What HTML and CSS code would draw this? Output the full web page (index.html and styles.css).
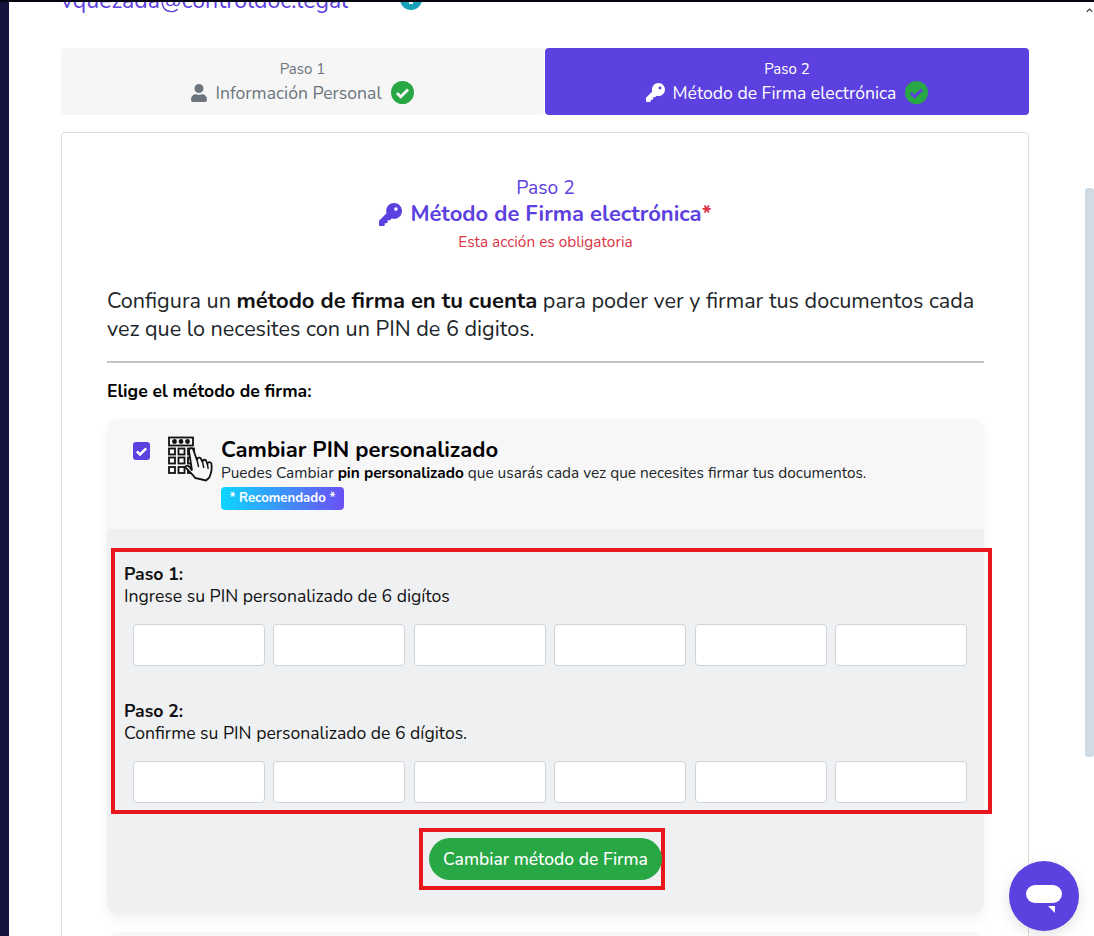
FILE: index.html
```html
<!DOCTYPE html>
<html lang="es">
<head>
<meta charset="utf-8">
<title>Método de Firma electrónica</title>
<link rel="stylesheet" href="styles.css">
</head>
<body>
<svg class="defs" width="0" height="0" aria-hidden="true">
  <symbol id="key" viewBox="0 0 512 512"><path d="M336 352c97 0 176-79 176-176S433 0 336 0 160 79 160 176c0 19 3 37 8 54L7 391c-4 4-7 11-7 17v80c0 13 11 24 24 24h80c13 0 24-11 24-24v-40h40c13 0 24-11 24-24v-40h40c6 0 13-3 17-7l33-33c17 5 35 8 54 8zm40-176a40 40 0 1 1 0-80 40 40 0 1 1 0 80z"/></symbol>
  <symbol id="ok" viewBox="0 0 24 24"><circle cx="12" cy="12" r="12" fill="#28a745"/><path d="M6.2 12.6l3.900 3.900 7.700-7.700" fill="none" stroke="currentColor" stroke-width="3"/></symbol>
</svg>
<div class="topline"></div>
<div class="layout">
  <div class="side"></div>
  <main class="main">
    <div class="who">
      <span class="email">vquezada@controldoc.legal</span>
      <span class="info"></span>
    </div>
    <div class="tabs">
      <div class="tab">
        <div>Paso 1</div>
        <div class="tab-title">
          <svg class="tab-ic" viewBox="0 0 448 512"><path fill="currentColor" d="M224 256a128 128 0 1 0 0-256 128 128 0 1 0 0 256zm90 32h-17a174 174 0 0 1-146 0h-17C60 288 0 348 0 422v42c0 26 22 48 48 48h352c26 0 48-22 48-48v-42c0-74-60-134-134-134z"/></svg>
          <span class="tab-text">Información Personal</span>
          <svg class="tab-ok ok-light"><use href="#ok"/></svg>
        </div>
      </div>
      <div class="tab tab-active">
        <div>Paso 2</div>
        <div class="tab-title">
          <svg class="tab-ic key-ic"><use href="#key"/></svg>
          <span class="tab-text">Método de Firma electrónica</span>
          <svg class="tab-ok ok-purple"><use href="#ok"/></svg>
        </div>
      </div>
    </div>
    <section class="card">
      <div class="head">
        <div class="head-step">Paso 2</div>
        <h1 class="head-title"><svg class="head-key"><use href="#key"/></svg>Método de Firma electrónica<span class="star">*</span></h1>
        <div class="head-req">Esta acción es obligatoria</div>
      </div>
      <p class="intro">Configura un <b>método de firma en tu cuenta</b> para poder ver y firmar tus documentos cada vez que lo necesites con un PIN de 6 digitos.</p>
      <hr class="rule">
      <div class="choose">Elige el método de firma:</div>
      <div class="option">
        <div class="opt-head">
          <span class="check"><svg viewBox="0 0 16 16"><path d="M3.600 8.300l3 3 5.800-5.800" fill="none" stroke="#fff" stroke-width="2.400"/></svg></span>
          <svg class="pad" viewBox="0 0 46 46" fill="none" stroke="#111" stroke-width="1.800">
            <rect x="1" y="1.500" width="24" height="8"/>
            <circle cx="6.500" cy="5.500" r="1.500" fill="#111"/><circle cx="13" cy="5.500" r="1.500" fill="#111"/><circle cx="19.500" cy="5.500" r="1.500" fill="#111"/>
            <rect x="1" y="12.500" width="6" height="6"/><rect x="10.500" y="12.500" width="6" height="6"/><rect x="20" y="12.500" width="6" height="6"/>
            <rect x="1" y="21.500" width="6" height="6"/><rect x="10.500" y="21.500" width="6" height="6"/><rect x="20" y="21.500" width="6" height="6"/>
            <rect x="1" y="31" width="6" height="6"/><rect x="10.500" y="31" width="6" height="6"/><rect x="20" y="31" width="6" height="6"/>
            <path fill="#f7f7f8" d="M17 31c1.500-2 4-1.500 5 .5l2 3L21 15c-.5-3 3.500-4 4.500-.8l3.500 10c0-3 3.500-3.500 4.300-.8l1 2.600c.2-2.800 3.400-3 4.200-.5l.9 2.400c.4-2.500 3.800-2.400 4.100.3 .8 5.200-.2 9-2.300 13.600L38 44.500 27 42c-1-2.500-3.500-4-5-6z"/>
            <path d="M29 24l1.600 7M34.500 26l1.300 6M39.400 28l.8 5" stroke-width="1.400"/>
          </svg>
          <div class="opt-text">
            <h2 class="opt-title">Cambiar PIN personalizado</h2>
            <div class="opt-desc">Puedes Cambiar <b>pin personalizado</b> que usarás cada vez que necesites firmar tus documentos.</div>
            <span class="badge">* Recomendado *</span>
          </div>
        </div>
        <div class="opt-body">
          <div class="pin-box">
            <div class="pin-label"><b>Paso 1:</b><br>Ingrese su PIN personalizado de 6 digítos</div>
            <div class="pins pins-first">
              <span class="pin"></span><span class="pin"></span><span class="pin"></span><span class="pin"></span><span class="pin"></span><span class="pin"></span>
            </div>
            <div class="pin-label"><b>Paso 2:</b><br>Confirme su PIN personalizado de 6 dígitos.</div>
            <div class="pins">
              <span class="pin"></span><span class="pin"></span><span class="pin"></span><span class="pin"></span><span class="pin"></span><span class="pin"></span>
            </div>
          </div>
          <div class="btn-row">
            <div class="btn-mark"><button class="btn" type="button">Cambiar método de Firma</button></div>
          </div>
        </div>
      </div>
      <div class="option option-next"></div>
    </section>
  </main>
  <div class="scroll">
    <svg class="scroll-up" viewBox="0 0 10 6"><path d="M1 5l4-4 4 4" fill="none" stroke="#333" stroke-width="1.600"/></svg>
    <div class="thumb"></div>
  </div>
</div>
<button class="chat" type="button" aria-label="Chat">
  <svg viewBox="0 0 36 28"><rect x="0" y="0" width="36" height="18" rx="9" fill="#fff"/><path d="M22 21h7v7z" fill="#fff"/></svg>
</button>
</body>
</html>
```
FILE: styles.css
```css
* { box-sizing: border-box; }
html, body { margin: 0; height: 100%; overflow: hidden; }
body { font-family: "Nunito", "Lato", "Liberation Sans", sans-serif; background: #fff; color: #000; position: relative; }
b { font-weight: 700; }
.defs { display: block; height: 0; }
.topline { height: 2px; background: #05060f; }
.layout { display: flex; height: 934px; }
.side { width: 9px; flex: none; background: #14123f; }
.main { width: 1076px; flex: none; padding: 0 56px 0 52px; overflow: hidden; }
.scroll { width: 9px; flex: none; padding-top: 6px; display: flex; flex-direction: column; }
.scroll-up { width: 7px; height: 5px; margin-left: 1px; }
.thumb { width: 9px; height: 569px; margin-top: 175px; background: #cfdbe5; border-radius: 3px; }

.who { height: 46px; display: flex; gap: 52px; margin-top: -12px; margin-bottom: 12px; align-items: flex-start; }
.email { font-size: 23.100px; line-height: 22px; color: #5c40e0; }
.info { width: 22px; height: 22px; margin-top: -2px; border-radius: 50%; background: #17a2b8; display: flex; justify-content: center; align-items: flex-end; padding-bottom: 6px; }
.info::before { content: ""; width: 4px; height: 4px; background: #fff; }

.tabs { display: grid; grid-template-columns: 483px 484px; gap: 1px; }
.tab { height: 67px; border-radius: 4px; background: #f6f6f6; color: #6c757d; text-align: center; font-size: 15px; line-height: 20px; padding-top: 11px; }
.tab-title { display: flex; justify-content: center; align-items: center; gap: 8px; font-size: 17.600px; line-height: 26px; }
.tab-text { padding-top: 1px; }
.tab-ic { width: 16px; height: 18px; fill: currentColor; }
.key-ic { width: 19px; height: 19px; }
.tab-ok { width: 23px; height: 23px; margin-left: 1px; }
.ok-light { color: #f6f6f6; }
.ok-purple { color: #5c40e0; }
.tab-active { background: #5c40e0; color: #fff; }

.card { margin-top: 17px; height: 830px; border: 1px solid #dedede; border-radius: 4px; padding: 42px 44px 0 45px; }
.head { text-align: center; }
.head-step { font-size: 19.300px; line-height: 25px; color: #5c40e0; }
.head-title { margin: 0; font-size: 22px; line-height: 28px; font-weight: 700; color: #5c40e0; display: flex; justify-content: center; align-items: center; gap: 8px; }
.head-key { width: 23px; height: 23px; fill: #5c40e0; }
.star { color: #dc3545; margin-left: -8px; }
.head-req { font-size: 15.400px; line-height: 20px; margin-top: 4px; color: #dc3545; }

.intro { margin: 35px 0 0; font-size: 21.600px; line-height: 28px; color: #212529; }
.intro b { color: #111; font-size: 22px; }
.rule { margin: 18px 0 0; border: 0; border-top: 2px solid #c4c4c4; }
.choose { margin-top: 17px; font-size: 17.600px; line-height: 22px; font-weight: 700; }

.option { margin-top: 17px; height: 495px; border-radius: 12px; background: #f7f7f8; box-shadow: 0 6px 12px rgba(0,0,0,.05); overflow: visible; display: flex; flex-direction: column; }
.opt-head { height: 110px; display: flex; padding: 17px 0 0 26px; }
.check { width: 17px; height: 18px; margin-top: 6px; border-radius: 3px; background: #5c40e0; flex: none; }
.check svg { display: block; width: 17px; height: 18px; }
.pad { width: 46px; height: 46px; margin-left: 18px; flex: none; }
.opt-text { margin: 1px 0 0 7px; }
.opt-title { margin: 0; font-size: 22px; line-height: 26px; font-weight: 700; }
.opt-desc { font-size: 15.400px; line-height: 20px; color: #212529; }
.opt-desc b { color: #000; }
.badge { display: inline-block; margin-top: 4px; padding: 0 8.500px; height: 23px; line-height: 22px; border-radius: 4px; font-size: 13.200px; font-weight: 700; color: #fff; background: linear-gradient(90deg, #0dd6ff, #6b50f5); }

.opt-body { flex: 1; background: #eff0f2; border-radius: 0 0 12px 12px; padding-top: 19px; }
.pin-box { width: 881px; margin-left: 4px; height: 266px; border: 4px solid #e8161d; padding: 11px 21px 0 9px; }
.pin-label { font-size: 17.600px; line-height: 22px; color: #111; }
.pins { display: grid; grid-template-columns: repeat(6, 1fr); gap: 8.800px; margin: 17px 0 0 9px; }
.pins-first { margin-bottom: 34px; }
.pin { height: 42px; background: #fff; border: 1px solid #ced4da; border-radius: 4px; }

.btn-row { display: flex; justify-content: center; margin-top: 14px; padding-right: 7px; }
.btn-mark { border: 4px solid #e8161d; padding: 6px 0 6px 6px; }
.btn { display: block; width: 233px; margin-right: -1px; height: 42px; border: 0; border-radius: 21px; background: #28a745; color: #fff; font: inherit; font-size: 17.500px; font-weight: 500; }

.option-next { margin-top: 18px; }

.chat { position: absolute; left: 1009px; top: 861px; width: 70px; height: 70px; padding: 6px 0 0; border: 0; border-radius: 50%; background: #5c40e0; box-shadow: 0 4px 14px rgba(0,0,0,.12); display: flex; align-items: center; justify-content: center; }
.chat svg { width: 36px; height: 28px; }
```
